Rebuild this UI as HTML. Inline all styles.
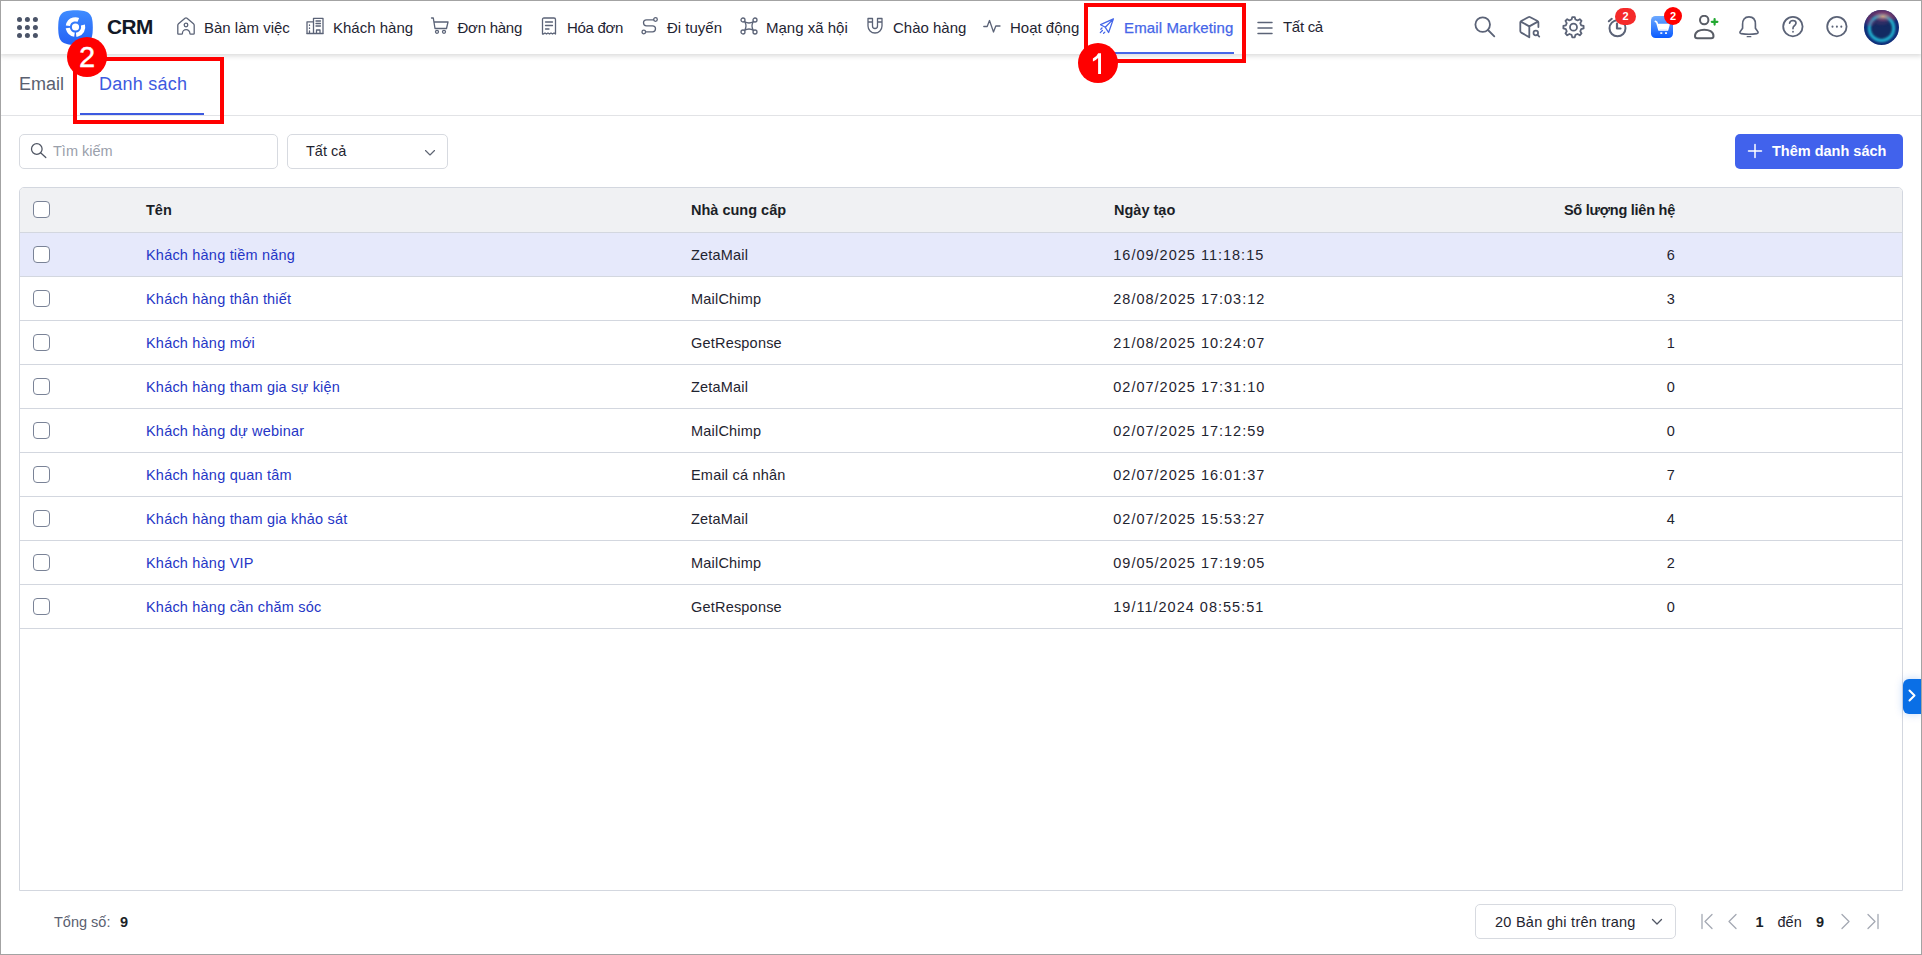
<!DOCTYPE html>
<html><head><meta charset="utf-8">
<style>
*{box-sizing:border-box;margin:0;padding:0}
html,body{width:1922px;height:955px;overflow:hidden;background:#fff;font-family:"Liberation Sans",sans-serif;color:#1f2430}
#frame{position:absolute;left:0;top:0;width:1922px;height:955px;border:1px solid #a3a3a3;z-index:50;pointer-events:none}
.abs{position:absolute}
#hdr{position:absolute;left:0;top:0;width:1922px;height:54px;background:#fff;box-shadow:0 2px 5px rgba(0,0,0,.15);z-index:5}
.nav{position:absolute;top:0;height:54px;display:flex;align-items:center;font-size:15px;color:#1f2533;white-space:nowrap}
.nav svg{position:absolute;top:17px;left:0;width:18px;height:18px;fill:none;stroke:#5b6377;stroke-width:1.3;overflow:visible;stroke-linecap:round;stroke-linejoin:round}
.nav span{position:absolute;top:18.8px;line-height:18px}
.ricon{position:absolute;top:16px;width:22px;height:22px;fill:none;stroke:#5b6377;stroke-width:1.8;stroke-linecap:round;stroke-linejoin:round}
.badge{position:absolute;width:20px;height:17px;border-radius:9px;background:#f0202a;color:#fff;font-size:11px;font-weight:bold;text-align:center;line-height:17px}
.redbox{position:absolute;border:4px solid #ff0000;z-index:20}
.redc{position:absolute;width:40px;height:40px;border-radius:50%;background:#ff0000;color:#fff;font-size:29px;text-align:center;line-height:41px;z-index:21;-webkit-text-stroke:0.4px #fff}
#tabs{position:absolute;left:0;top:54px;width:1922px;height:62px;border-bottom:1px solid #e2e3e6}
.tab{position:absolute;top:19px;font-size:18px;line-height:22px}
.inp{position:absolute;top:134px;height:35px;border:1px solid #d7dae0;border-radius:5px;background:#fff}
#tbl{position:absolute;left:19px;top:187px;width:1884px;height:704px;border:1px solid #d3d7df;border-radius:5px 5px 0 0;overflow:hidden}
.row{position:absolute;left:0;width:1882px;height:44px;border-bottom:1px solid #d3d7df}
.cell{position:absolute;top:1px;line-height:43px;font-size:14.5px;white-space:nowrap;letter-spacing:.2px}
.dt{letter-spacing:1px}
.cb{position:absolute;left:13px;top:13px;width:17px;height:17px;border:1.5px solid #7a8397;border-radius:4px;background:#fff}
.lnk{color:#2536c6}
.hd{font-weight:bold;color:#1b1f27;letter-spacing:0;top:0}
</style></head><body>
<div id="frame"></div>
<div id="hdr">
  <svg class="abs" style="left:15px;top:15px" width="25" height="25" viewBox="0 0 25 25"><g fill="#4b5468">
    <circle cx="4.5" cy="4.6" r="2.5"/><circle cx="12.4" cy="4.6" r="2.5"/><circle cx="20.4" cy="4.6" r="2.5"/>
    <circle cx="4.5" cy="12.4" r="2.5"/><circle cx="12.4" cy="12.4" r="2.5"/><circle cx="20.4" cy="12.4" r="2.5"/>
    <circle cx="4.5" cy="20.4" r="2.5"/><circle cx="12.4" cy="20.4" r="2.5"/><circle cx="20.4" cy="20.4" r="2.5"/></g></svg>
  <svg class="abs" style="left:58px;top:10px" width="35" height="35" viewBox="0 0 35 35">
    <defs><linearGradient id="lg" x1="0" y1="0" x2="0" y2="1"><stop offset="0" stop-color="#3f8cff"/><stop offset="1" stop-color="#2461f5"/></linearGradient></defs>
    <path d="M17.5 0.2C31.5 0.2 34.8 3.5 34.8 17.5S31.5 34.8 17.5 34.8 0.2 31.5 0.2 17.5 3.5 0.2 17.5 0.2Z" fill="url(#lg)"/>
    <circle cx="17.5" cy="17" r="3.6" fill="#fff"/>
    <circle cx="17.5" cy="17" r="7.7" fill="none" stroke="#fff" stroke-width="4.2" stroke-dasharray="13.44 1.61 10.08 2.15 13.71 7.39" transform="rotate(-15 17.5 17)"/>
  </svg>
  <div class="abs" style="left:107px;top:15.5px;font-size:20.8px;font-weight:bold;color:#121826;line-height:22px;letter-spacing:-0.55px">CRM</div>

  <div class="nav" style="left:177px">
    <svg viewBox="0 0 18 18"><path d="M0.8 16.4V8.3Q0.8 7.4 1.5 6.8L8 1.3Q9 0.5 10 1.3L16.5 6.8Q17.2 7.4 17.2 8.3V16.4Q17.2 17.2 16.4 17.2H13.7Q12.9 17.2 12.9 16.4A3.75 3.75 0 0 0 5.4 16.4Q5.4 17.2 4.6 17.2H1.6Q0.8 17.2 0.8 16.4Z"/><circle cx="9" cy="8" r="1.8"/></svg>
    <span style="left:27px">Bàn làm việc</span></div>
  <div class="nav" style="left:306px">
    <svg viewBox="0 0 18 18"><path d="M7.5 16.5V1.3H17V16.5ZM1 16.5V4.8H7.5M0.8 16.5H17.2M10 4H14.5M10 6.5H14.5M10 9H14.5M10.5 16.5V13H14V16.5M3.5 8V8.4M3.5 11V11.4M3.5 14V16"/></svg>
    <span style="left:27px">Khách hàng</span></div>
  <div class="nav" style="left:431px">
    <svg viewBox="0 0 18 18"><path d="M0.5 1H2.3L4 11.5H15.5L17 5H2.8"/><circle cx="6" cy="14.8" r="1.5"/><circle cx="13" cy="14.8" r="1.5"/></svg>
    <span style="left:26.5px;letter-spacing:-0.25px">Đơn hàng</span></div>
  <div class="nav" style="left:541px">
    <svg viewBox="0 0 18 18"><path d="M1.5 17V2.5Q1.5 1 3 1H13Q14.5 1 14.5 2.5V17L13 16 11.5 17 10 16 8.5 17 7 16 5.5 17 4 16 2.5 17ZM4.5 5H11.5M4.5 8.5H11.5M4.5 12H8"/></svg>
    <span style="left:26px;letter-spacing:-0.3px">Hóa đơn</span></div>
  <div class="nav" style="left:641px">
    <svg viewBox="0 0 18 18"><circle cx="14.5" cy="2.5" r="1.8"/><circle cx="2.8" cy="15" r="1.8"/><path d="M12.5 2.8H5.5A3 3 0 0 0 5.5 8.8H11.5A3 3 0 0 1 11.5 14.8H4.8"/></svg>
    <span style="left:26px">Đi tuyến</span></div>
  <div class="nav" style="left:740px">
    <svg viewBox="0 0 18 18"><circle cx="3" cy="3" r="2"/><circle cx="15" cy="3" r="2"/><circle cx="3" cy="15" r="2"/><circle cx="15" cy="15" r="2"/><path d="M4.5 4.5Q9 7.5 13.5 4.5Q10.5 9 13.5 13.5Q9 10.5 4.5 13.5Q7.5 9 4.5 4.5Z"/></svg>
    <span style="left:26px">Mạng xã hội</span></div>
  <div class="nav" style="left:866px">
    <svg viewBox="0 0 18 18"><path d="M2 1.5V9A7 7 0 0 0 16 9V1.5H11.5V9A2.5 2.5 0 0 1 6.5 9V1.5ZM2 5H6.5M11.5 5H16"/></svg>
    <span style="left:27px">Chào hàng</span></div>
  <div class="nav" style="left:983px">
    <svg viewBox="0 0 18 18"><path d="M0.8 9.5H4.2L6.5 3.5L10.5 15L12.8 9H17"/></svg>
    <span style="left:27px">Hoạt động</span></div>
  <div class="nav" style="left:1099px;color:#4566e8">
    <svg viewBox="0 0 16 16" style="stroke:#4566e8;width:16px;height:16px;top:18px;stroke-width:1.3"><path d="M14.4 0.9L1.6 6.7 6.3 9.3 9.6 14.5ZM14.4 0.9L6.3 9.3M1.3 14.6L3.4 12.5M1.8 11.2L3 10M4.6 15.3L5.8 14.1"/></svg>
    <span style="left:25px;-webkit-text-stroke:0.25px #4566e8;letter-spacing:.13px">Email Marketing</span></div>
  <div class="abs" style="left:1115px;top:52px;width:119px;height:2px;background:#4566e8"></div>
  <div class="nav" style="left:1257px">
    <svg viewBox="0 0 16 18" style="width:16px"><path d="M1 5.5H15M1 11H15M1 16.5H15" stroke-width="1.5"/></svg>
    <span style="left:26px;top:17.8px;letter-spacing:-0.3px">Tất cả</span></div>

  <svg class="ricon" style="left:1472px;top:16px;overflow:visible" viewBox="0 0 22 22"><circle cx="10.7" cy="8.6" r="7.3"/><path d="M16 14L22.3 20.3"/></svg>
  <svg class="ricon" style="left:1519px;top:16px;overflow:visible" viewBox="0 0 22 22"><path d="M10.3 21.2L2.2 16.6Q1.3 16 1.3 15V6.5Q1.3 5.5 2.2 5L9.3 1.2Q10.3 0.7 11.3 1.2L18.5 5Q19.4 5.5 19.4 6.5V11M1.8 5.6L10.3 10.4 18.9 5.6M10.3 10.4V21.3"/><circle cx="16.8" cy="17" r="2.3" stroke-width="1.7"/><path d="M18.5 18.8L20.3 20.6" stroke-width="1.7"/></svg>
  <svg class="ricon" style="left:1562px;top:16px;overflow:visible" viewBox="0 0 22 22"><path d="M9.59 3.53 L10.26 1.08 L12.74 1.08 L13.41 3.53 L15.57 4.43 L17.78 3.16 L19.54 4.92 L18.27 7.13 L19.17 9.29 L21.62 9.96 L21.62 12.44 L19.17 13.11 L18.27 15.27 L19.54 17.48 L17.78 19.24 L15.57 17.97 L13.41 18.87 L12.74 21.32 L10.26 21.32 L9.59 18.87 L7.43 17.97 L5.22 19.24 L3.46 17.48 L4.73 15.27 L3.83 13.11 L1.38 12.44 L1.38 9.96 L3.83 9.29 L4.73 7.13 L3.46 4.92 L5.22 3.16 L7.43 4.43Z"/><circle cx="11.5" cy="11.2" r="3.5"/></svg>
  <svg class="ricon" style="left:1606px;top:16px;width:24px;height:24px" viewBox="0 0 24 24"><circle cx="11.5" cy="12.3" r="8" stroke-width="2"/><path d="M2.8 5.3L5.8 2.8" stroke-width="2"/><path d="M11 7.5V12.5H14.5" stroke-width="2.2"/></svg>
  <div class="badge" style="left:1615px;top:8px;width:21px;height:17px;background:#f52a2a">2</div>
  <svg class="abs" style="left:1651px;top:16px" width="22" height="22" viewBox="0 0 22 22">
    <defs><linearGradient id="cg" x1="0" y1="0" x2="0" y2="1"><stop offset="0" stop-color="#6eaaff"/><stop offset="1" stop-color="#0a5bff"/></linearGradient></defs>
    <rect width="22" height="22" rx="4.5" fill="url(#cg)"/>
    <path d="M4.3 5.3L5.8 6.2 8 14H16.5L18 8.5H7" fill="none" stroke="#fff" stroke-width="1.6" stroke-linejoin="round" stroke-linecap="round"/>
    <path d="M7 9H18L16.5 13.5H8.2Z" fill="#fff"/>
    <rect x="9.3" y="16.3" width="2" height="1.6" fill="#fff"/><rect x="14" y="16.3" width="2" height="1.6" fill="#fff"/>
  </svg>
  <div class="badge" style="left:1664px;top:7px;width:18px;height:18px;border-radius:50%;background:#ff0000;line-height:18px">2</div>
  <svg class="ricon" style="left:1693px;top:15px;width:26px;height:25px;stroke:#595d66" viewBox="0 0 26 25"><circle cx="11.2" cy="5" r="4.2" stroke-width="2"/><path d="M2 21C2 12.5 20.5 12.5 20.5 21Q20.5 23.3 18.2 23.3H4.3Q2 23.3 2 21Z" stroke-width="2"/><path d="M21.6 4V9.6M18.8 6.8H24.4" stroke="#22a831" stroke-width="2.2"/></svg>
  <svg class="ricon" style="left:1738px;top:16px" viewBox="0 0 22 24"><path d="M11 1C6 1 4 4.5 4 9V13.3L1.2 17.3Q0.8 19 2.5 19.3 11 20.5 19.5 19.3 21.2 19 20.8 17.3L18 13.3V9C18 4.5 16 1 11 1Z"/><path d="M9 22.5H13" stroke-width="1.3"/></svg>
  <svg class="ricon" style="left:1781px;top:16px;overflow:visible" viewBox="0 0 22 22"><circle cx="11.9" cy="10.6" r="9.7"/><path d="M8.6 7.2Q9 4.6 11.9 4.5 15.1 4.6 15 7.3 14.9 8.8 12.9 10.2 12 10.9 12 12.6M12 15.6V15.8" stroke-width="1.7"/></svg>
  <svg class="ricon" style="left:1825px;top:16px;overflow:visible" viewBox="0 0 22 22"><circle cx="11.9" cy="10.6" r="9.7"/><path d="M7.5 10.6V10.7M11.9 10.6V10.7M16.3 10.6V10.7" stroke-width="2"/></svg>
  <svg class="abs" style="left:1864px;top:10px" width="35" height="35" viewBox="0 0 35 35">
    <defs><clipPath id="avc"><circle cx="17.5" cy="17.5" r="17.5"/></clipPath>
    <radialGradient id="avg" cx="0.5" cy="0.5" r="0.5"><stop offset="0" stop-color="#e8a07a" stop-opacity="1"/><stop offset="1" stop-color="#b04080" stop-opacity="0"/></radialGradient>
    <filter id="bl" x="-20%" y="-20%" width="140%" height="140%"><feGaussianBlur stdDeviation="0.9"/></filter></defs>
    <g clip-path="url(#avc)">
    <rect width="35" height="35" fill="#0f2c78"/><ellipse cx="17.5" cy="5" rx="16" ry="9" fill="#6a3566" opacity="0.8" filter="url(#bl)"/>
    <circle cx="17.5" cy="18.5" r="11" fill="#132a62"/><ellipse cx="17.5" cy="11" rx="8" ry="4" fill="#3a3068" opacity="0.7" filter="url(#bl)"/>
    <circle cx="17.5" cy="18.2" r="12.2" fill="none" stroke="#22b4cf" stroke-width="3" filter="url(#bl)"/>
    <ellipse cx="19" cy="6.5" rx="11" ry="6" fill="url(#avg)" opacity="0.85"/>
    <ellipse cx="6" cy="12" rx="5" ry="4" fill="#a03070" opacity="0.35" filter="url(#bl)"/>
    </g>
  </svg>
</div>
<div id="tabs">
  <div class="tab" style="left:19px;color:#5a6070">Email</div>
  <div class="tab" style="left:99px;color:#3d5ae0;letter-spacing:.25px">Danh sách</div>
  <div class="abs" style="left:80px;top:59px;width:124px;height:2px;background:#3d5ae0"></div>
</div>

<div class="redbox" style="left:1084px;top:3px;width:162px;height:60px"></div>
<div class="redc" style="left:1078px;top:43px"><svg width="40" height="40" viewBox="0 0 40 40" style="position:absolute;left:0;top:0"><path d="M20.2 10.3H23V31H20.1V14.9Q18.1 17.2 14.9 18.4V15.6Q18.5 14.1 20.2 10.3Z" fill="#fff"/></svg></div>
<div class="redbox" style="left:73px;top:57px;width:151px;height:67px"></div>
<div class="redc" style="left:67px;top:37px">2</div>

<div class="inp" style="left:19px;width:259px">
  <svg class="abs" style="left:10px;top:7px" width="17" height="17" viewBox="0 0 17 17" fill="none" stroke="#4f5563" stroke-width="1.25" stroke-linecap="round"><circle cx="6.8" cy="7" r="5.3"/><path d="M10.6 10.8L15.8 15.5"/></svg>
  <div class="abs" style="left:33px;top:8px;font-size:14.5px;line-height:17px;color:#9aa0ab">Tìm kiếm</div>
</div>
<div class="inp" style="left:287px;width:161px">
  <div class="abs" style="left:18px;top:8px;font-size:14.5px;line-height:17px;color:#1f2430">Tất cả</div>
  <svg class="abs" style="left:136px;top:13.5px" width="12" height="8" viewBox="0 0 12 8" fill="none" stroke="#5f6573" stroke-width="1.15" stroke-linecap="round" stroke-linejoin="round"><path d="M1.5 1.5L6 6 10.5 1.5"/></svg>
</div>
<div class="abs" style="left:1735px;top:134px;width:168px;height:35px;border-radius:5px;background:#4162ec">
  <svg class="abs" style="left:12px;top:9px" width="16" height="16" viewBox="0 0 16 16" stroke="#fff" stroke-width="1.5" stroke-linecap="round"><path d="M8 1.5V14.5M1.5 8H14.5"/></svg>
  <div class="abs" style="left:37px;top:9px;font-size:14.5px;line-height:17px;font-weight:bold;color:#fff">Thêm danh sách</div>
</div>

<div id="tbl">
<div class="row" style="top:0;height:45px;background:#f0f1f3"><div class="cb" style="top:13px"></div><div class="cell hd" style="left:126px;line-height:44px">Tên</div><div class="cell hd" style="left:671px;line-height:44px">Nhà cung cấp</div><div class="cell hd" style="left:1094px;line-height:44px">Ngày tạo</div><div class="cell hd" style="right:227px;line-height:44px;letter-spacing:-0.25px">Số lượng liên hệ</div></div>
<div class="row" style="top:45px;background:#e6e9fb;"><div class="cb"></div><div class="cell lnk" style="left:126px">Khách hàng tiềm năng</div><div class="cell" style="left:671px">ZetaMail</div><div class="cell dt" style="left:1093.3px">16/09/2025 11:18:15</div><div class="cell" style="right:227.3px;letter-spacing:0">6</div></div>
<div class="row" style="top:89px;"><div class="cb"></div><div class="cell lnk" style="left:126px">Khách hàng thân thiết</div><div class="cell" style="left:671px">MailChimp</div><div class="cell dt" style="left:1093.3px">28/08/2025 17:03:12</div><div class="cell" style="right:227.3px;letter-spacing:0">3</div></div>
<div class="row" style="top:133px;"><div class="cb"></div><div class="cell lnk" style="left:126px">Khách hàng mới</div><div class="cell" style="left:671px">GetResponse</div><div class="cell dt" style="left:1093.3px">21/08/2025 10:24:07</div><div class="cell" style="right:227.3px;letter-spacing:0">1</div></div>
<div class="row" style="top:177px;"><div class="cb"></div><div class="cell lnk" style="left:126px">Khách hàng tham gia sự kiện</div><div class="cell" style="left:671px">ZetaMail</div><div class="cell dt" style="left:1093.3px">02/07/2025 17:31:10</div><div class="cell" style="right:227.3px;letter-spacing:0">0</div></div>
<div class="row" style="top:221px;"><div class="cb"></div><div class="cell lnk" style="left:126px">Khách hàng dự webinar</div><div class="cell" style="left:671px">MailChimp</div><div class="cell dt" style="left:1093.3px">02/07/2025 17:12:59</div><div class="cell" style="right:227.3px;letter-spacing:0">0</div></div>
<div class="row" style="top:265px;"><div class="cb"></div><div class="cell lnk" style="left:126px">Khách hàng quan tâm</div><div class="cell" style="left:671px">Email cá nhân</div><div class="cell dt" style="left:1093.3px">02/07/2025 16:01:37</div><div class="cell" style="right:227.3px;letter-spacing:0">7</div></div>
<div class="row" style="top:309px;"><div class="cb"></div><div class="cell lnk" style="left:126px">Khách hàng tham gia khảo sát</div><div class="cell" style="left:671px">ZetaMail</div><div class="cell dt" style="left:1093.3px">02/07/2025 15:53:27</div><div class="cell" style="right:227.3px;letter-spacing:0">4</div></div>
<div class="row" style="top:353px;"><div class="cb"></div><div class="cell lnk" style="left:126px">Khách hàng VIP</div><div class="cell" style="left:671px">MailChimp</div><div class="cell dt" style="left:1093.3px">09/05/2025 17:19:05</div><div class="cell" style="right:227.3px;letter-spacing:0">2</div></div>
<div class="row" style="top:397px;"><div class="cb"></div><div class="cell lnk" style="left:126px">Khách hàng cần chăm sóc</div><div class="cell" style="left:671px">GetResponse</div><div class="cell dt" style="left:1093.3px">19/11/2024 08:55:51</div><div class="cell" style="right:227.3px;letter-spacing:0">0</div></div>
</div>

<div class="abs" style="left:54px;top:913.5px;font-size:14.5px;line-height:17px;color:#5a6070">Tổng số:</div>
<div class="abs" style="left:120px;top:913.5px;font-size:14.5px;line-height:17px;color:#1b1f27;font-weight:bold">9</div>
<div class="inp" style="left:1475px;top:904px;width:201px">
  <div class="abs" style="left:19px;top:9px;font-size:14.5px;line-height:17px;color:#1f2430;letter-spacing:.25px">20 Bản ghi trên trang</div>
  <svg class="abs" style="left:175px;top:13px" width="12" height="8" viewBox="0 0 12 8" fill="none" stroke="#4f5563" stroke-width="1.3" stroke-linecap="round" stroke-linejoin="round"><path d="M1.5 1.5L6 6 10.5 1.5"/></svg>
</div>
<svg class="abs" style="left:1700px;top:913px" width="16" height="17" viewBox="0 0 16 17" fill="none" stroke="#a4a9b3" stroke-width="1.3" stroke-linecap="round" stroke-linejoin="round"><path d="M2 1.5V15.5M12 1.5L5 8.5 12 15.5"/></svg>
<svg class="abs" style="left:1726px;top:913px" width="14" height="17" viewBox="0 0 14 17" fill="none" stroke="#a4a9b3" stroke-width="1.3" stroke-linecap="round" stroke-linejoin="round"><path d="M10 1.5L3 8.5 10 15.5"/></svg>
<div class="abs" style="left:1755.5px;top:913.5px;font-size:14.5px;line-height:17px;color:#1b1f27;font-weight:bold">1</div>
<div class="abs" style="left:1777.5px;top:913.5px;font-size:14.5px;line-height:17px;color:#1f2430">đến</div>
<div class="abs" style="left:1816px;top:913.5px;font-size:14.5px;line-height:17px;color:#1b1f27;font-weight:bold">9</div>
<svg class="abs" style="left:1838px;top:913px" width="14" height="17" viewBox="0 0 14 17" fill="none" stroke="#a4a9b3" stroke-width="1.3" stroke-linecap="round" stroke-linejoin="round"><path d="M4 1.5L11 8.5 4 15.5"/></svg>
<svg class="abs" style="left:1864px;top:913px" width="16" height="17" viewBox="0 0 16 17" fill="none" stroke="#a4a9b3" stroke-width="1.3" stroke-linecap="round" stroke-linejoin="round"><path d="M14 1.5V15.5M4 1.5L11 8.5 4 15.5"/></svg>
<div class="abs" style="left:1903px;top:679px;width:19px;height:35px;border-radius:6px 0 0 6px;background:#0a6fe6;box-shadow:0 0 8px rgba(10,100,230,.25)">
  <svg class="abs" style="left:5px;top:10.3px" width="8" height="13" viewBox="0 0 8 13" fill="none" stroke="#fff" stroke-width="2" stroke-linecap="round" stroke-linejoin="round"><path d="M1.5 1.5L6.5 6.5 1.5 11.5"/></svg>
</div>

</body></html>
